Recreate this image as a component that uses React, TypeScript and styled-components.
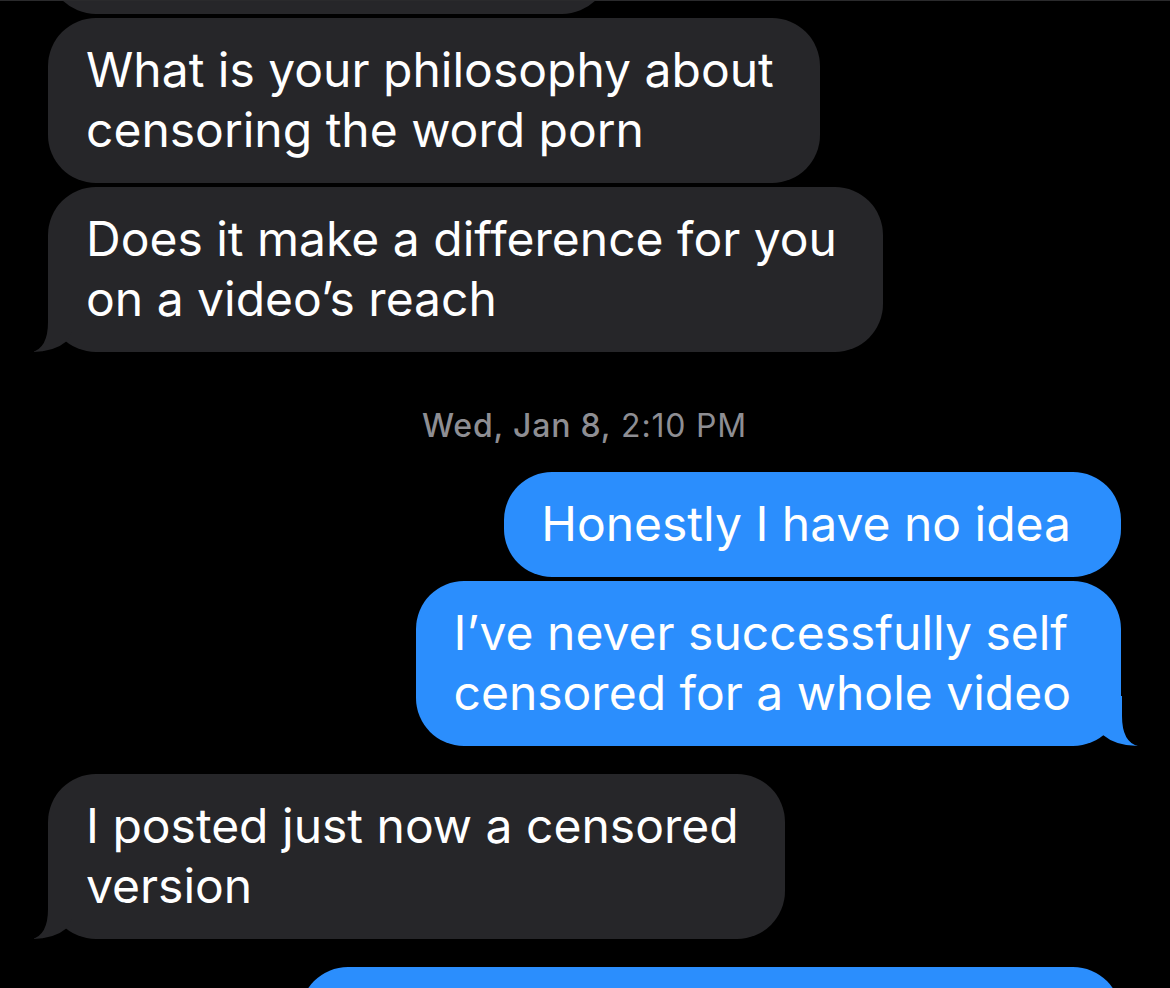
import React from "react";
import styled, { createGlobalStyle } from "styled-components";

const GlobalStyle = createGlobalStyle`
  html, body {
    margin: 0;
    padding: 0;
    background: #000;
  }
  body {
    overflow: hidden;
    font-family: "Inter", "Noto Sans", sans-serif;
    -webkit-font-smoothing: antialiased;
  }
`;

const Screen = styled.main`
  width: 1170px;
  height: 988px;
  overflow: hidden;
  background: #000;
  box-sizing: border-box;
  border-top: 1px solid #2a2a2c;
  padding: 0 49px 0 48px;
  display: flex;
  flex-direction: column;
`;

type Side = "in" | "out";

const Group = styled.div<{ $side: Side; $offset?: number }>`
  flex-shrink: 0;
  display: flex;
  flex-direction: column;
  gap: 4px;
  margin-top: ${(p) => p.$offset ?? 28}px;
  align-items: ${(p) => (p.$side === "in" ? "flex-start" : "flex-end")};
`;

const Bubble = styled.div<{ $side: Side; $width?: number }>`
  position: relative;
  flex-shrink: 0;
  box-sizing: border-box;
  ${(p) => (p.$width ? `width: ${p.$width}px; min-height: 105px;` : "")}
  padding: ${(p) => (p.$side === "in" ? "22px 46px 23px 38px" : "22px 50px 23px 37px")};
  border-radius: 48px;
  background: ${(p) => (p.$side === "in" ? "#262629" : "#2b8efd")};
  color: #fff;
  font-size: 48px;
  line-height: 60px;
  white-space: pre-line;
`;

const TailSvg = styled.svg<{ $side: Side }>`
  position: absolute;
  bottom: 0;
  width: 40px;
  height: 50px;
  ${(p) =>
    p.$side === "in"
      ? "left: -16px;"
      : "right: -17px; transform: scaleX(-1);"}
`;

const Tail = ({ side }: { side: Side }) => (
  <TailSvg $side={side} viewBox="0 0 40 50" aria-hidden>
    <path
      d="M16 0 V20 Q16 46 0 50 Q22 50 35 39 L40 30 L40 0 Z"
      fill={side === "in" ? "#262629" : "#2b8efd"}
    />
  </TailSvg>
);

const Stamp = styled.div`
  flex-shrink: 0;
  box-sizing: border-box;
  height: 120px;
  padding-top: 55px;
  text-align: center;
  color: #8e8e93;
  font-size: 32px;
  line-height: 38px;
  letter-spacing: 0.8px;
`;

const StampDay = styled.span`
  font-weight: 500;
`;

const Message = ({
  side,
  tail,
  width,
  children,
}: {
  side: Side;
  tail?: boolean;
  width?: number;
  children?: React.ReactNode;
}) => (
  <Bubble $side={side} $width={width}>
    {children}
    {tail && <Tail side={side} />}
  </Bubble>
);

export default function App() {
  return (
    <>
      <GlobalStyle />
      <Screen>
        <Group $side="in" $offset={-92}>
          <Message side="in" width={562} />
          <Message side="in">{"What is your philosophy about\ncensoring the word porn"}</Message>
          <Message side="in" tail>
            {"Does it make a difference for you\non a video’s reach"}
          </Message>
        </Group>
        <Stamp>
          <StampDay>Wed, Jan 8,</StampDay> 2:10 PM
        </Stamp>
        <Group $side="out" $offset={0}>
          <Message side="out">Honestly I have no idea</Message>
          <Message side="out" tail>
            {"I’ve never successfully self\ncensored for a whole video"}
          </Message>
        </Group>
        <Group $side="in">
          <Message side="in" tail>{"I posted just now a censored\nversion"}</Message>
        </Group>
        <Group $side="out">
          <Message side="out" width={821} />
        </Group>
      </Screen>
    </>
  );
}
